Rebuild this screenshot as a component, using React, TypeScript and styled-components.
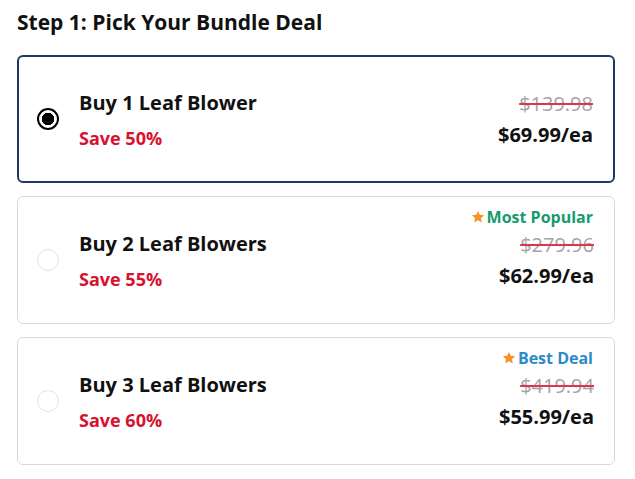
import React, { useState } from 'react';
import styled, { createGlobalStyle } from 'styled-components';

const GlobalStyle = createGlobalStyle`
  body {
    margin: 0;
    background: #ffffff;
    font-family: 'Open Sans', 'Noto Sans', Arial, sans-serif;
    color: #111111;
  }
`;

interface IDeal {
  title: string;
  save: string;
  was: string;
  price: string;
  badge?: { text: string; color: string };
}

const deals: IDeal[] = [
  { title: 'Buy 1 Leaf Blower', save: 'Save 50%', was: '$139.98', price: '$69.99/ea' },
  {
    title: 'Buy 2 Leaf Blowers',
    save: 'Save 55%',
    was: '$279.96',
    price: '$62.99/ea',
    badge: { text: 'Most Popular', color: '#179a6c' },
  },
  {
    title: 'Buy 3 Leaf Blowers',
    save: 'Save 60%',
    was: '$419.94',
    price: '$55.99/ea',
    badge: { text: 'Best Deal', color: '#2a8cc6' },
  },
];

export default function App() {
  const [selected, setSelected] = useState(0);

  return (
    <Page>
      <GlobalStyle />
      <Heading>Step 1: Pick Your Bundle Deal</Heading>
      <List>
        {deals.map((deal, i) => (
          <Card key={deal.title} active={i === selected} onClick={() => setSelected(i)}>
            <Radio active={i === selected} />
            <Info>
              <Title>{deal.title}</Title>
              <Save>{deal.save}</Save>
            </Info>
            <Prices>
              <Was>{deal.was}</Was>
              <Price>{deal.price}</Price>
            </Prices>
            {deal.badge && (
              <Badge color={deal.badge.color}>
                <Star />
                {deal.badge.text}
              </Badge>
            )}
          </Card>
        ))}
      </List>
    </Page>
  );
}

function Star() {
  return (
    <svg width="14" height="14" viewBox="0 0 24 24" style={{ marginRight: 2 }}>
      <polygon
        points="12,1.5 15.1,8.3 22.5,9.1 17,14.1 18.5,21.5 12,17.7 5.5,21.5 7,14.1 1.5,9.1 8.9,8.3"
        fill="#f5922a"
      />
    </svg>
  );
}

const Page = styled.div`
  width: 635px;
  padding: 8px 20px 0 17px;
  box-sizing: border-box;
`;

const Heading = styled.h1`
  margin: 0 0 19px 0;
  font-size: 21px;
  line-height: 28px;
  font-weight: 700;
  color: #111111;
`;

const List = styled.div`
  display: flex;
  flex-direction: column;
  gap: 13px;
`;

const Card = styled.div<{ active?: boolean }>`
  position: relative;
  height: 128px;
  box-sizing: border-box;
  display: flex;
  align-items: center;
  padding: 0 20px 0 ${(p) => (p.active ? '18px' : '19px')};
  border: ${(p) => (p.active ? '2px solid #1f3a68' : '1px solid #d9d9d9')};
  border-radius: 6px;
  background: #ffffff;
  cursor: pointer;
`;

const Radio = styled.span<{ active?: boolean }>`
  width: 22px;
  height: 22px;
  box-sizing: border-box;
  border-radius: 50%;
  flex-shrink: 0;
  border: ${(p) => (p.active ? '2.5px solid #000000' : '1px solid #e2e2e2')};
  background: ${(p) =>
    p.active ? 'radial-gradient(circle, #000 0 6px, #fff 6.5px)' : '#ffffff'};
`;

const Info = styled.div`
  display: flex;
  flex-direction: column;
  margin-left: 20px;
  padding-top: 2px;
  flex: 1;
`;

const Title = styled.div`
  font-size: 20px;
  line-height: 28px;
  font-weight: 700;
  color: #111111;
`;

const Save = styled.div`
  margin-top: 8px;
  font-size: 18px;
  line-height: 26px;
  font-weight: 700;
  color: #d7122f;
`;

const Prices = styled.div`
  display: flex;
  flex-direction: column;
  align-items: flex-end;
  padding-top: 2px;
`;

const Was = styled.div`
  font-size: 20px;
  line-height: 26px;
  color: #a3a3a3;
  text-decoration: line-through;
  text-decoration-color: #dc3550;
  text-decoration-thickness: 2px;
`;

const Price = styled.div`
  margin-top: 4px;
  font-size: 20px;
  line-height: 28px;
  font-weight: 700;
  color: #111111;
`;

const Badge = styled.div<{ color: string }>`
  position: absolute;
  top: 9px;
  right: 21px;
  display: flex;
  align-items: center;
  font-size: 16px;
  line-height: 22px;
  font-weight: 700;
  color: ${(p) => p.color};
`;
